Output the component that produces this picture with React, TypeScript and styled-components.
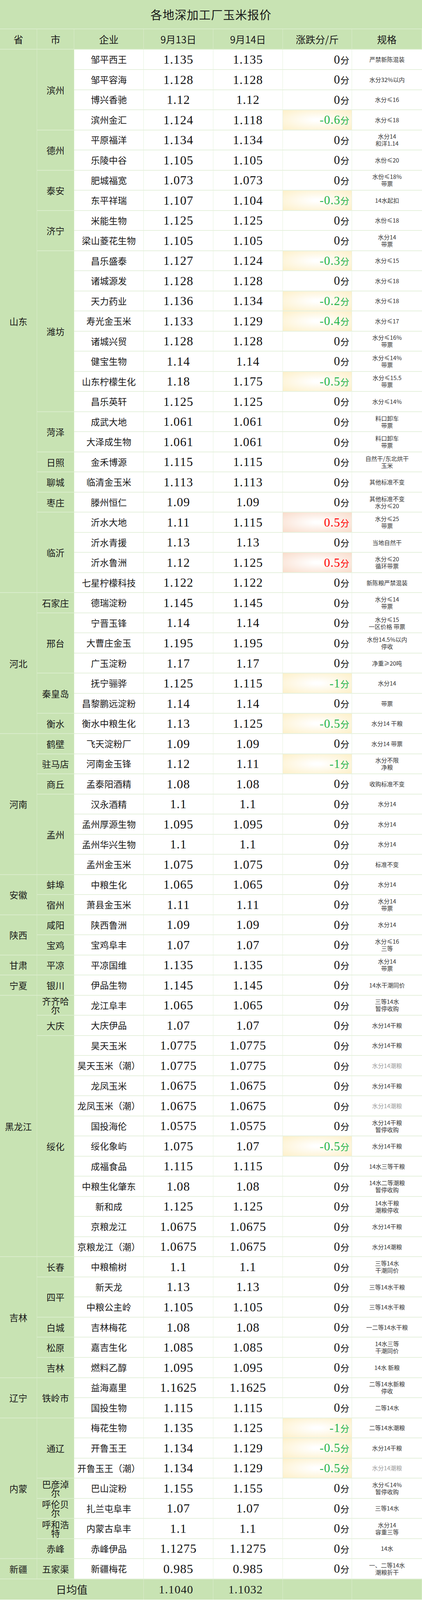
import React from 'react'
import styled, { createGlobalStyle, css } from 'styled-components'

const GREEN = '#c8e3b3'
const LINE = '#e6f1de'
const GREEN_LINE = '#d9ecca'

// the sheet is drawn for a 4916px tall frame; vertical sizes follow the window height
const u = (n: number) => `calc(var(--unit) * ${n})`

const GlobalStyle = createGlobalStyle`
  html, body {
    margin: 0;
    padding: 0;
    background: #ffffff;
  }
  body {
    font-family: 'Noto Sans CJK SC', 'Noto Sans', sans-serif;
    color: #1a1a1a;
  }
`

type Row = { company: string; d1: string; d2: string; diff: number; spec: string[]; muted?: boolean }
type City = { name: string; rows: Row[] }
type Province = { name: string; cities: City[] }

const r = (company: string, d1: string, d2: string, diff: number, spec: string, muted = false): Row => ({
  company,
  d1,
  d2,
  diff,
  spec: spec.split('|'),
  muted,
})

const provinces: Province[] = [
  {
    name: '山东',
    cities: [
      {
        name: '滨州',
        rows: [
          r('邹平西王', '1.135', '1.135', 0, '严禁新陈混装'),
          r('邹平容海', '1.128', '1.128', 0, '水分32%以内'),
          r('博兴香驰', '1.12', '1.12', 0, '水分≤16'),
          r('滨州金汇', '1.124', '1.118', -0.6, '水分≤18'),
        ],
      },
      {
        name: '德州',
        rows: [
          r('平原福洋', '1.134', '1.134', 0, '水分14|和洋1.14'),
          r('乐陵中谷', '1.105', '1.105', 0, '水份≤20'),
        ],
      },
      {
        name: '泰安',
        rows: [
          r('肥城福宽', '1.073', '1.073', 0, '水份≤18%|带票'),
          r('东平祥瑞', '1.107', '1.104', -0.3, '14水起扣'),
        ],
      },
      {
        name: '济宁',
        rows: [
          r('米能生物', '1.125', '1.125', 0, '水份≤18'),
          r('梁山菱花生物', '1.105', '1.105', 0, '水分14|带票'),
        ],
      },
      {
        name: '潍坊',
        rows: [
          r('昌乐盛泰', '1.127', '1.124', -0.3, '水分≤15'),
          r('诸城源发', '1.128', '1.128', 0, '水分≤18'),
          r('天力药业', '1.136', '1.134', -0.2, '水分≤18'),
          r('寿光金玉米', '1.133', '1.129', -0.4, '水分≤17'),
          r('诸城兴贸', '1.128', '1.128', 0, '水分≤16%|带票'),
          r('健宝生物', '1.14', '1.14', 0, '水分≤14%|带票'),
          r('山东柠檬生化', '1.18', '1.175', -0.5, '水分≤15.5|带票'),
          r('昌乐英轩', '1.125', '1.125', 0, '水分≤14%'),
        ],
      },
      {
        name: '菏泽',
        rows: [
          r('成武大地', '1.061', '1.061', 0, '料口卸车|带票'),
          r('大泽成生物', '1.061', '1.061', 0, '料口卸车|带票'),
        ],
      },
      { name: '日照', rows: [r('金禾博源', '1.115', '1.115', 0, '自然干/东北烘干|玉米')] },
      { name: '聊城', rows: [r('临清金玉米', '1.113', '1.113', 0, '其他标准不变')] },
      { name: '枣庄', rows: [r('滕州恒仁', '1.09', '1.09', 0, '其他标准不变|水分≤20')] },
      {
        name: '临沂',
        rows: [
          r('沂水大地', '1.11', '1.115', 0.5, '水分≤25|带票'),
          r('沂水青援', '1.13', '1.13', 0, '当地自然干'),
          r('沂水鲁洲', '1.12', '1.125', 0.5, '水分≤20|循环带票'),
          r('七星柠檬科技', '1.122', '1.122', 0, '新陈粮严禁混装'),
        ],
      },
    ],
  },
  {
    name: '河北',
    cities: [
      { name: '石家庄', rows: [r('德瑞淀粉', '1.145', '1.145', 0, '水分≤14|带票')] },
      {
        name: '邢台',
        rows: [
          r('宁晋玉锋', '1.14', '1.14', 0, '水分≤15|一区价格 带票'),
          r('大曹庄金玉', '1.195', '1.195', 0, '水份14.5%以内|停收'),
          r('广玉淀粉', '1.17', '1.17', 0, '净重≥20吨'),
        ],
      },
      {
        name: '秦皇岛',
        rows: [
          r('抚宁骊骅', '1.125', '1.115', -1, '水分14'),
          r('昌黎鹏远淀粉', '1.14', '1.14', 0, '带票'),
        ],
      },
      { name: '衡水', rows: [r('衡水中粮生化', '1.13', '1.125', -0.5, '水分14 干粮')] },
    ],
  },
  {
    name: '河南',
    cities: [
      { name: '鹤壁', rows: [r('飞天淀粉厂', '1.09', '1.09', 0, '水分14 带票')] },
      { name: '驻马店', rows: [r('河南金玉锋', '1.12', '1.11', -1, '水分不限|净粮')] },
      { name: '商丘', rows: [r('孟泰阳酒精', '1.08', '1.08', 0, '收购标准不变')] },
      {
        name: '孟州',
        rows: [
          r('汉永酒精', '1.1', '1.1', 0, '水分14'),
          r('孟州厚源生物', '1.095', '1.095', 0, '水分14'),
          r('孟州华兴生物', '1.1', '1.1', 0, '水分14'),
          r('孟州金玉米', '1.075', '1.075', 0, '标准不变'),
        ],
      },
    ],
  },
  {
    name: '安徽',
    cities: [
      { name: '蚌埠', rows: [r('中粮生化', '1.065', '1.065', 0, '水分14')] },
      { name: '宿州', rows: [r('萧县金玉米', '1.11', '1.11', 0, '水分14|带票')] },
    ],
  },
  {
    name: '陕西',
    cities: [
      { name: '咸阳', rows: [r('陕西鲁洲', '1.09', '1.09', 0, '水分14')] },
      { name: '宝鸡', rows: [r('宝鸡阜丰', '1.07', '1.07', 0, '水分≤16|三等')] },
    ],
  },
  { name: '甘肃', cities: [{ name: '平凉', rows: [r('平凉国维', '1.135', '1.135', 0, '水分14|带票')] }] },
  { name: '宁夏', cities: [{ name: '银川', rows: [r('伊品生物', '1.145', '1.145', 0, '14水干潮同价')] }] },
  {
    name: '黑龙江',
    cities: [
      { name: '齐齐哈尔', rows: [r('龙江阜丰', '1.065', '1.065', 0, '三等14水|暂停收购')] },
      { name: '大庆', rows: [r('大庆伊品', '1.07', '1.07', 0, '水分14干粮')] },
      {
        name: '绥化',
        rows: [
          r('昊天玉米', '1.0775', '1.0775', 0, '水分14干粮'),
          r('昊天玉米（潮）', '1.0775', '1.0775', 0, '水分14潮粮', true),
          r('龙凤玉米', '1.0675', '1.0675', 0, '水分14干粮'),
          r('龙凤玉米（潮）', '1.0675', '1.0675', 0, '水分14潮粮', true),
          r('国投海伦', '1.0575', '1.0575', 0, '水分14干粮|暂停收购'),
          r('绥化象屿', '1.075', '1.07', -0.5, '水分14干粮'),
          r('成福食品', '1.115', '1.115', 0, '14水三等干粮'),
          r('中粮生化肇东', '1.08', '1.08', 0, '14水二等潮粮|暂停收购'),
          r('新和成', '1.125', '1.125', 0, '14水干粮|潮粮停收'),
          r('京粮龙江', '1.0675', '1.0675', 0, '水分14干粮'),
          r('京粮龙江（潮）', '1.0675', '1.0675', 0, '水分14潮粮'),
        ],
      },
    ],
  },
  {
    name: '吉林',
    cities: [
      { name: '长春', rows: [r('中粮榆树', '1.1', '1.1', 0, '三等14水|干潮同价')] },
      {
        name: '四平',
        rows: [
          r('新天龙', '1.13', '1.13', 0, '三等14水干粮'),
          r('中粮公主岭', '1.105', '1.105', 0, '三等14水干粮'),
        ],
      },
      { name: '白城', rows: [r('吉林梅花', '1.08', '1.08', 0, '一二等14水干粮')] },
      { name: '松原', rows: [r('嘉吉生化', '1.085', '1.085', 0, '14水三等|干潮同价')] },
      { name: '吉林', rows: [r('燃料乙醇', '1.095', '1.095', 0, '14水 新粮')] },
    ],
  },
  {
    name: '辽宁',
    cities: [
      {
        name: '铁岭市',
        rows: [
          r('益海嘉里', '1.1625', '1.1625', 0, '二等14水新粮|停收'),
          r('国投生物', '1.115', '1.115', 0, '二等14水'),
        ],
      },
    ],
  },
  {
    name: '内蒙',
    cities: [
      {
        name: '通辽',
        rows: [
          r('梅花生物', '1.135', '1.125', -1, '二等14水潮粮'),
          r('开鲁玉王', '1.134', '1.129', -0.5, '水分14干粮'),
          r('开鲁玉王（潮）', '1.134', '1.129', -0.5, '水分14潮粮', true),
        ],
      },
      { name: '巴彦淖尔', rows: [r('巴山淀粉', '1.155', '1.155', 0, '水分≤14%|暂停收购')] },
      { name: '呼伦贝尔', rows: [r('扎兰屯阜丰', '1.07', '1.07', 0, '三等14水')] },
      { name: '呼和浩特', rows: [r('内蒙古阜丰', '1.1', '1.1', 0, '水分14|容重三等')] },
      { name: '赤峰', rows: [r('赤峰伊品', '1.1275', '1.1275', 0, '14水')] },
    ],
  },
  { name: '新疆', cities: [{ name: '五家渠', rows: [r('新疆梅花', '0.985', '0.985', 0, '一、二等14水|潮粮折干')] }] },
]

const COLUMNS = '95px 95px 178px 178px 178px 177px 179px'

const Page = styled.div`
  --unit: calc(max(100vh, 4096px) / 4916);
  width: 1080px;
  background: #ffffff;
`

const Title = styled.div`
  height: ${u(90)};
  box-sizing: border-box;
  display: flex;
  align-items: center;
  justify-content: center;
  background: ${GREEN};
  border-bottom: 2px solid ${GREEN_LINE};
  font-size: 30px;
  line-height: 1;
  letter-spacing: 1px;
  color: #1a1a1a;
`

const HeadRow = styled.div`
  display: grid;
  grid-template-columns: ${COLUMNS};
  height: ${u(63)};
`

const Body = styled.div`
  display: grid;
  grid-template-columns: ${COLUMNS};
  grid-auto-rows: ${u(61.842)};
`

const FootRow = styled.div`
  display: grid;
  grid-template-columns: ${COLUMNS};
  height: ${u(63)};
`

const cellBase = css`
  box-sizing: border-box;
  display: flex;
  align-items: center;
  justify-content: center;
  min-width: 0;
  min-height: 0;
  overflow: hidden;
  line-height: 1.2;
  border-right: 1px solid ${LINE};
  border-bottom: 2px solid ${LINE};
`

const HeadCell = styled.div`
  ${cellBase}
  background: ${GREEN};
  border-color: ${GREEN_LINE};
  font-size: 25px;
  color: #1a1a1a;
`

const GroupCell = styled.div<{ $col: number; $span: number }>`
  ${cellBase}
  grid-column: ${p => p.$col};
  grid-row: span ${p => p.$span};
  overflow: visible;
  background: ${GREEN};
  border-color: ${GREEN_LINE};
  padding: 0 6px;
  text-align: center;
  font-size: 23px;
  line-height: 22px;
  color: #1a1a1a;
`

const CompanyCell = styled.div`
  ${cellBase}
  grid-column: 3;
  background: #ffffff;
  font-size: 23px;
  white-space: nowrap;
  color: #1a1a1a;
`

const PriceCell = styled.div<{ $col: number }>`
  ${cellBase}
  grid-column: ${p => p.$col};
  background: #ffffff;
  font-family: 'Liberation Serif', 'Noto Sans CJK SC', serif;
  font-size: 32px;
  letter-spacing: 1px;
  color: #111111;
`

type Trend = 'up' | 'down' | 'flat'

const ChangeCell = styled.div<{ $trend: Trend }>`
  ${cellBase}
  grid-column: 6;
  justify-content: flex-end;
  padding-right: 6px;
  background: ${p =>
    p.$trend === 'down'
      ? 'radial-gradient(ellipse at 50% 50%, #ffffff 8%, #fdf0c9 100%)'
      : p.$trend === 'up'
        ? 'radial-gradient(ellipse at 50% 50%, #ffffff 8%, #f9dccb 100%)'
        : '#ffffff'};
  color: ${p => (p.$trend === 'down' ? '#1fb34a' : p.$trend === 'up' ? '#ff0000' : '#111111')};
`

const ChangeText = styled.span`
  line-height: 1;
  white-space: nowrap;
`

const ChangeValue = styled.span`
  font-family: 'Liberation Serif', 'Noto Sans CJK SC', serif;
  font-size: 31px;
  letter-spacing: 1px;
`

const ChangeUnit = styled.span`
  font-size: 23px;
`

const SpecCell = styled.div<{ $muted?: boolean }>`
  ${cellBase}
  grid-column: 7;
  flex-direction: column;
  background: #ffffff;
  border-right: none;
  font-size: 15px;
  line-height: 18px;
  text-align: center;
  color: ${p => (p.$muted ? '#9a9a9a' : '#333333')};
`

const FooterLabel = styled.div`
  ${cellBase}
  grid-column: 1 / span 3;
  background: ${GREEN};
  border-color: ${GREEN_LINE};
  border-bottom: none;
  font-size: 27px;
  color: #1a1a1a;
`

const FooterValue = styled.div`
  ${cellBase}
  background: ${GREEN};
  border-color: ${GREEN_LINE};
  border-bottom: none;
  padding-right: 12px;
  font-family: 'Liberation Serif', 'Noto Sans CJK SC', serif;
  font-size: 30px;
  letter-spacing: 1px;
  color: #1a1a1a;
`

const FooterBlank = styled.div`
  ${cellBase}
  background: ${GREEN};
  border-color: ${GREEN_LINE};
  border-bottom: none;
`

const trendOf = (d: number): Trend => (d < 0 ? 'down' : d > 0 ? 'up' : 'flat')

function DataRow({ row }: { row: Row }) {
  const trend = trendOf(row.diff)
  return (
    <>
      <CompanyCell>{row.company}</CompanyCell>
      <PriceCell $col={4}>{row.d1}</PriceCell>
      <PriceCell $col={5}>{row.d2}</PriceCell>
      <ChangeCell $trend={trend}>
        <ChangeText>
          <ChangeValue>{String(row.diff)}</ChangeValue>
          <ChangeUnit>分</ChangeUnit>
        </ChangeText>
      </ChangeCell>
      <SpecCell $muted={row.muted}>
        {row.spec.map((line, i) => (
          <div key={i}>{line}</div>
        ))}
      </SpecCell>
    </>
  )
}

export default function App() {
  const headers = ['省', '市', '企业', '9月13日', '9月14日', '涨跌分/斤', '规格']

  return (
    <Page>
      <GlobalStyle />
      <Title>各地深加工厂玉米报价</Title>
      <HeadRow>
        {headers.map(h => (
          <HeadCell key={h}>{h}</HeadCell>
        ))}
      </HeadRow>
      <Body>
        {provinces.map(p => {
          const total = p.cities.reduce((n, c) => n + c.rows.length, 0)
          return p.cities.map((c, ci) =>
            c.rows.map((row, ri) => (
              <React.Fragment key={`${p.name}-${c.name}-${row.company}`}>
                {ci === 0 && ri === 0 && (
                  <GroupCell $col={1} $span={total}>
                    {p.name}
                  </GroupCell>
                )}
                {ri === 0 && (
                  <GroupCell $col={2} $span={c.rows.length}>
                    {c.name}
                  </GroupCell>
                )}
                <DataRow row={row} />
              </React.Fragment>
            ))
          )
        })}
      </Body>
      <FootRow>
        <FooterLabel>日均值</FooterLabel>
        <FooterValue>1.1040</FooterValue>
        <FooterValue>1.1032</FooterValue>
        <FooterBlank />
        <FooterBlank />
      </FootRow>
    </Page>
  )
}
